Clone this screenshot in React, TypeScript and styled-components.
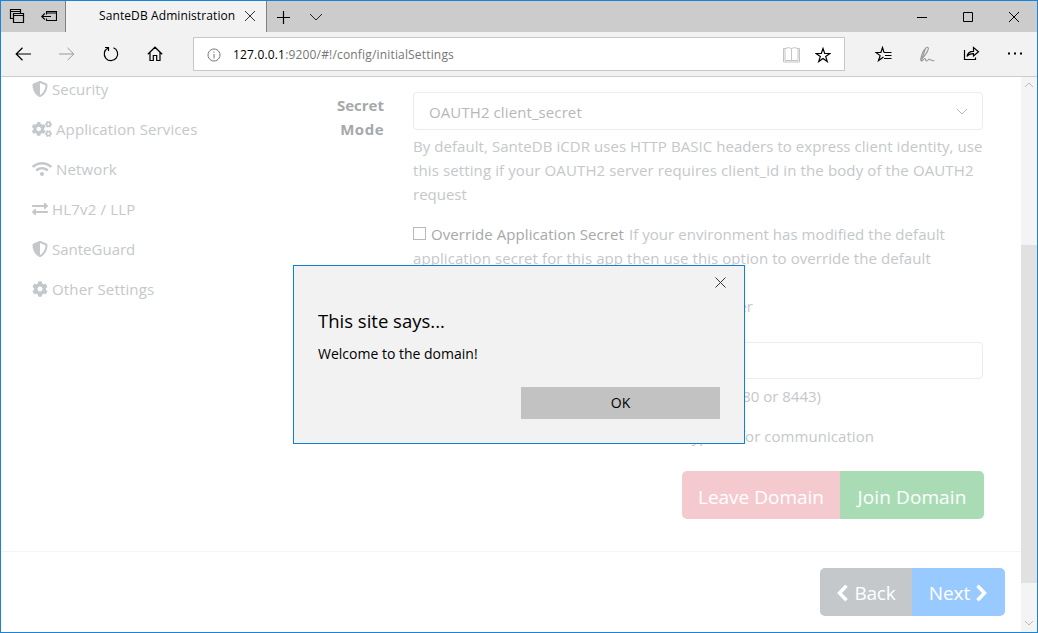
import React from 'react';
import styled, { createGlobalStyle } from 'styled-components';
import { FaShieldAlt, FaCogs, FaWifi, FaExchangeAlt, FaCog } from 'react-icons/fa';

const GlobalStyle = createGlobalStyle`
  * { box-sizing: border-box; }
  body { margin: 0; background: #fff; }
  svg { display: block; flex: none; }
`;

const Window = styled.div`
  position: relative;
  width: 1038px;
  height: 633px;
  border: 1px solid #1883d7;
  background: #fff;
  font-family: 'Open Sans', 'Noto Sans', sans-serif;
  font-size: 15px;
  line-height: 24px;
  color: #c4c8cb;
  display: flex;
  flex-direction: column;
  overflow: hidden;
`;

const Text = styled.span<{ $track?: number }>`
  letter-spacing: ${p => p.$track ?? 0}px;
  white-space: nowrap;
`;

const TabBar = styled.div`
  height: 31px;
  flex: none;
  background: #ccc;
  display: flex;
  color: #000;
`;

const TabTools = styled.div`
  width: 65px;
  border-right: 1px solid #808080;
  display: flex;
  align-items: center;
  padding-left: 8px;
  gap: 16px;
`;

const Tab = styled.div`
  width: 201px;
  background: #f2f2f2;
  border-right: 1px solid #808080;
  display: flex;
  align-items: center;
  padding: 0 10px 1px 33px;
  justify-content: space-between;
  font-size: 12px;
`;

const TabTitle = styled(Text)`
  width: 136px;
  overflow: hidden;
`;

const TabActions = styled.div`
  display: flex;
  align-items: center;
  gap: 19px;
  padding-left: 9px;
  flex: 1;
`;

const Caption = styled.div`
  display: flex;
  align-items: center;
  gap: 36px;
  padding-right: 18px;
`;

const Toolbar = styled.div`
  height: 45px;
  flex: none;
  background: #f2f2f2;
  border-bottom: 1px solid #ccc;
  display: flex;
  align-items: center;
  color: #000;
`;

const NavButtons = styled.div`
  width: 192px;
  display: flex;
  align-items: center;
  gap: 28px;
  padding-left: 14px;
`;

const AddressBar = styled.div`
  width: 652px;
  height: 34px;
  border: 1px solid #c8c8c8;
  background: #fff;
  display: flex;
  align-items: center;
  padding: 1px 13px 0 13px;
  font-size: 12px;
  color: #767676;
`;

const Address = styled(Text)`
  flex: 1;
  padding-left: 12px;
  b { font-weight: 400; color: #000; }
`;

const AddressIcons = styled.div`
  display: flex;
  gap: 15px;
`;

const ToolIcons = styled.div`
  display: flex;
  gap: 27px;
  padding-left: 30px;
`;

const Viewport = styled.div`
  flex: 1;
  min-height: 0;
  display: flex;
`;

const Page = styled.div`
  width: 1020px;
  display: flex;
  flex-direction: column;
`;

const Columns = styled.div`
  height: 475px;
  border-bottom: 1px solid #f3f4f4;
  display: flex;
  overflow: hidden;
`;

const Menu = styled.nav`
  width: 288px;
  padding-left: 31px;
  margin-top: -8px;
`;

const MenuItem = styled.div`
  height: 40px;
  display: flex;
  align-items: center;
  gap: 4px;
`;

const Label = styled.div`
  width: 95px;
  padding-top: 16px;
  text-align: right;
  font-weight: 700;
  color: #a6a8aa;
  display: flex;
  flex-direction: column;
`;

const Field = styled.div`
  width: 571px;
  margin-left: 29px;
  padding-top: 15px;
  display: flex;
  flex-direction: column;
`;

const Select = styled.div`
  width: 570px;
  height: 38px;
  border: 1px solid #ebeced;
  border-radius: 4px;
  display: flex;
  align-items: center;
  justify-content: space-between;
  padding: 2px 14px 0 15px;
  color: #b5b8bb;
`;

const Help = styled.div<{ $top?: number; $width?: number }>`
  margin-top: ${p => p.$top ?? 0}px;
  width: ${p => (p.$width ? p.$width + 'px' : 'auto')};
  text-align: ${p => (p.$width ? 'right' : 'left')};
  display: flex;
  flex-direction: column;
  white-space: nowrap;
`;

const CheckLine = styled.div`
  display: flex;
  align-items: center;
`;

const Checkbox = styled.span`
  width: 13px;
  height: 13px;
  border: 1px solid #b9b9b9;
  margin: -2px 5px 0 0;
`;

const CheckLabel = styled(Text)`
  color: #a6a8aa;
  margin-right: 5px;
`;

const Input = styled.div`
  width: 570px;
  height: 37px;
  flex: none;
  margin-top: 24px;
  border: 1px solid #ebeced;
  border-radius: 4px;
`;

const ButtonGroup = styled.div`
  display: flex;
  align-self: flex-end;
  border-radius: 5px;
  overflow: hidden;
`;

const Button = styled.div<{ $bg: string; $width: number; $drop?: number }>`
  width: ${p => p.$width}px;
  height: 48px;
  background: ${p => p.$bg};
  color: #fff;
  font-size: 19px;
  padding-top: ${p => p.$drop ?? 3}px;
  display: flex;
  align-items: center;
  justify-content: center;
  gap: 5px;
`;

const FormActions = styled(ButtonGroup)`
  margin-top: 23px;
`;

const Footer = styled.div`
  display: flex;
  justify-content: flex-end;
  padding: 16px 16px 0 0;
`;

const ScrollBar = styled.div`
  width: 16px;
  background: #f4f4f4;
  display: flex;
  flex-direction: column;
  align-items: center;
  justify-content: space-between;
  padding: 5px 0 6px;
`;

const ScrollTrack = styled.div`
  width: 16px;
  height: 338px;
  margin-top: 120px;
  background: #e1e1e1;
`;

const Dialog = styled.div`
  position: absolute;
  left: 292px;
  top: 264px;
  width: 452px;
  height: 179px;
  border: 1px solid #0f7fd9;
  background: #f2f2f2;
  color: #000;
  display: flex;
  flex-direction: column;
  padding: 11px 24px 24.5px;
`;

const DialogClose = styled.div`
  align-self: flex-end;
  margin-right: -6px;
`;

const DialogTitle = styled.div`
  font-size: 18.5px;
  margin-top: 21px;
`;

const DialogBody = styled.div`
  font-size: 14px;
  margin-top: 9px;
`;

const OkButton = styled.div`
  width: 199px;
  height: 32px;
  margin-top: auto;
  align-self: flex-end;
  background: #c2c2c2;
  font-size: 14px;
  padding-top: 1px;
  display: flex;
  align-items: center;
  justify-content: center;
`;

type IconProps = { w: number; h: number; d: string; color?: string; sw?: number };
const Line = ({ w, h, d, color = '#000', sw = 1 }: IconProps) => (
  <svg width={w} height={h} viewBox={`0 0 ${w} ${h}`} fill="none" stroke={color} strokeWidth={sw}>
    <path d={d} />
  </svg>
);

const menu = [
  { icon: <FaShieldAlt size={16} />, text: 'Security', track: 0.06 },
  { icon: <FaCogs size={20} />, text: 'Application Services', track: 0.12 },
  { icon: <FaWifi size={20} />, text: 'Network', track: 0.15 },
  { icon: <FaExchangeAlt size={16} />, text: 'HL7v2 / LLP', track: 0.18 },
  { icon: <FaShieldAlt size={16} />, text: 'SanteGuard', track: 0 },
  { icon: <FaCog size={16} />, text: 'Other Settings', track: 0.14 },
];

export default function App() {
  return (
    <>
      <GlobalStyle />
      <Window>
        <TabBar>
          <TabTools>
            <Line w={16} h={15} sw={1.2} d="M4.500 4.500h10v9h-10zM4.500 6.500h10M4.500 9.500h-3v-9h10v4M1.500 2.500h10" />
            <Line w={16} h={13} sw={1.1} d="M5.500 4.500v-3h10v9h-10V8.500M5.500 3h10M1 6.500h9M3.800 3.500L.8 6.500l3 3" />
          </TabTools>
          <Tab>
            <TabTitle $track={0.1}>SanteDB Administration</TabTitle>
            <Line w={12} h={12} d="M1 1l10 10M11 1L1 11" color="#333" />
          </Tab>
          <TabActions>
            <Line w={14} h={14} d="M7.500 1v13M1 7.500h13" sw={1.2} />
            <Line w={14} h={8} d="M1 1l6 6 6-6" color="#222" />
          </TabActions>
          <Caption>
            <Line w={10} h={10} d="M0 5.500h10" />
            <Line w={10} h={10} d="M.5.5h9v9h-9z" />
            <Line w={10} h={10} d="M0 0l10 10M10 0L0 10" />
          </Caption>
        </TabBar>
        <Toolbar>
          <NavButtons>
            <Line w={16} h={14} d="M1 7h15M7.500.8L1.200 7l6.300 6.200" sw={1.2} />
            <Line w={16} h={14} d="M0 7h15M8.500.8L14.800 7l-6.300 6.200" color="#999" />
            <Line w={16} h={16} d="M10.500 1.800A6.700 6.700 0 1 1 5 2M2 1.500h3.500V5" sw={1.2} />
            <Line w={16} h={16} d="M.8 8.200L8 1.200l7.200 7M3 6.500V14.500h3.300V9.500h3.400v5H13v-8" sw={1.2} />
          </NavButtons>
          <AddressBar>
            <Line w={14} h={14} d="M7 1a6 6 0 1 0 .01 0zM7 6v4.500M7 3.500v1.200" color="#777" />
            <Address $track={0.17}><b>127.0.0.1</b>:9200/#!/config/initialSettings</Address>
            <AddressIcons>
              <Line w={17} h={16} d="M.5 1.500H2V13.500h13V1.500h1.500v13.500H.5zM2 1.500Q6-.3 8.500 1.500 11-.3 15 1.500M8.500 1.500v12.500" color="#c4c4c4" />
              <Line w={16} h={16} d="M8 1.500l1.700 5h5.200l-4.200 3.100 1.600 5L8 11.500l-4.300 3.100 1.600-5L1.100 6.500h5.200z" sw={1.2} />
            </AddressIcons>
          </AddressBar>
          <ToolIcons>
            <Line w={17} h={16} d="M9 6.500H16.500M10 9.500h6.500M9 12.500h7.500M9 6.500L7.500 1.500l-1.600 5H1l4.100 3.100-1.600 5L8.500 11" sw={1.2} />
            <Line w={17} h={16} d="M2 15.200L6.500 2.500C7.200.8 9.800.8 9.300 3 8.500 6 5.500 10 3 12.500M2 15.200C1.200 12.500 3 6 6.500 2.500M2 15.200c1.800 0 2.800-2.700 4-2.700 1.200 0 0 2.500 1.500 2.500s1.800-2.200 3.200-1.800c1.200.3 1.500 2.300 4.800 1.300" color="#999" sw={1.1} />
            <Line w={17} h={16} d="M1.500 4v9.500h11V11.500M4 10.500c.5-3.800 2.700-5.200 6.500-5.200V1.500l5 4.300-5 4.200V7.700C7.500 7.700 5.500 8.200 4 10.500z" sw={1.2} />
            <Line w={16} h={16} d="M1 7.500h2M7 7.500h2M13 7.500h2" sw={2} />
          </ToolIcons>
        </Toolbar>
        <Viewport>
          <Page>
            <Columns>
              <Menu>
                {menu.map(m => (
                  <MenuItem key={m.text}>{m.icon}<Text $track={m.track}>{m.text}</Text></MenuItem>
                ))}
              </Menu>
              <Label><Text>Secret</Text><Text $track={0.5}>Mode</Text></Label>
              <Field>
                <Select>
                  <Text $track={0.1}>OAUTH2 client_secret</Text>
                  <Line w={12} h={8} d="M1 1l5 5 5-5" color="#b5b5b5" />
                </Select>
                <Help $top={4}>
                  <Text $track={0.06}>By default, SanteDB iCDR uses HTTP BASIC headers to express client identity, use</Text>
                  <Text $track={0.115}>this setting if your OAUTH2 server requires client_id in the body of the OAUTH2</Text>
                  <Text>request</Text>
                </Help>
                <Help $top={16}>
                  <CheckLine>
                    <Checkbox />
                    <CheckLabel $track={0.07}>Override Application Secret</CheckLabel>
                    <Text $track={0.05}>If your environment has modified the default</Text>
                  </CheckLine>
                  <Text $track={0.075}>application secret for this app then use this option to override the default</Text>
                </Help>
                <Help $top={24} $width={340}>
                  <Text>server</Text>
                </Help>
                <Input />
                <Help $top={5} $width={408}>
                  <Text>8080 or 8443)</Text>
                </Help>
                <Help $top={16} $width={461}>
                  <Text $track={0.05}>encryption for communication</Text>
                </Help>
                <FormActions>
                  <Button $bg="#f5cacf" $width={158}><Text>Leave Domain</Text></Button>
                  <Button $bg="#a9dcb5" $width={144}><Text $track={0.1}>Join Domain</Text></Button>
                </FormActions>
              </Field>
            </Columns>
            <Footer>
              <ButtonGroup>
                <Button $bg="#c4c8cb" $width={92} $drop={1}>
                  <Line w={13} h={18} d="M10.500 1.800L3.500 9l7 7.200" color="#fff" sw={3.4} />
                  <Text $track={-0.2}>Back</Text>
                </Button>
                <Button $bg="#99caff" $width={93} $drop={1}>
                  <Text>Next</Text>
                  <Line w={13} h={18} d="M2.500 1.800l7 7.200-7 7.200" color="#fff" sw={3.4} />
                </Button>
              </ButtonGroup>
            </Footer>
          </Page>
          <ScrollBar>
            <Line w={10} h={6} d="M1 5l4-4 4 4" color="#bbb" />
            <ScrollTrack />
            <Line w={10} h={6} d="M1 1l4 4 4-4" color="#bbb" />
          </ScrollBar>
        </Viewport>
        <Dialog>
          <DialogClose><Line w={11} h={11} d="M.5.5l10 10M10.500.5l-10 10" color="#333" /></DialogClose>
          <DialogTitle><Text>This site says...</Text></DialogTitle>
          <DialogBody><Text>Welcome to the domain!</Text></DialogBody>
          <OkButton><Text>OK</Text></OkButton>
        </Dialog>
      </Window>
    </>
  );
}
